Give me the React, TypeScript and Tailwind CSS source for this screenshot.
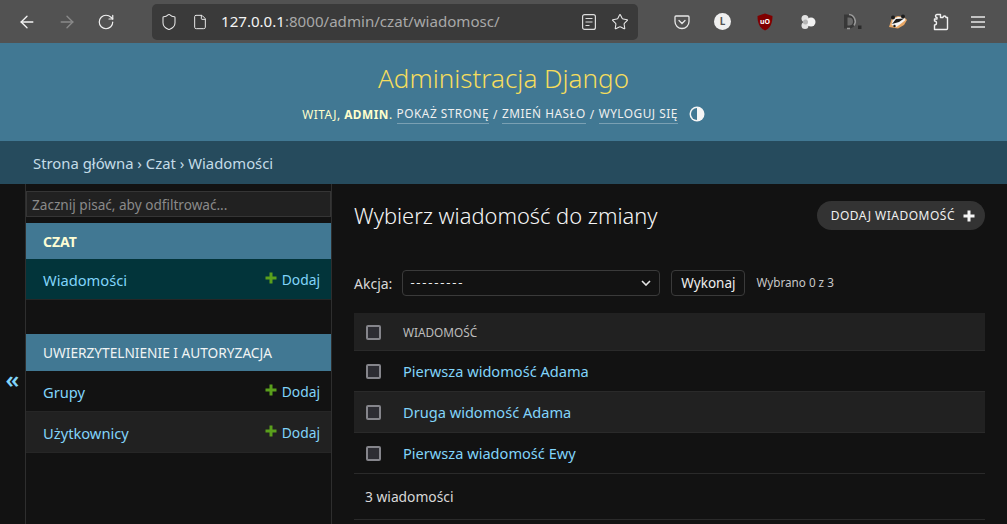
import { ArrowLeft, ArrowRight, RotateCw, Shield, File, Star } from "lucide-react";

const font = "font-['Noto_Sans',sans-serif]";

function Plus({ className }: { className: string }) {
  return (
    <svg viewBox="0 0 12 12" className={className}>
      <path d="M4.500 0.500h3v4h4v3h-4v4h-3v-4h-4v-3h4z" fill="currentColor" />
    </svg>
  );
}

function ExtensionIcons() {
  return (
    <div className="flex items-center">
      {/* pocket */}
      <svg viewBox="0 0 16 16" className="ml-[36px] h-4 w-4 text-[#e8e8e8]" fill="none" stroke="currentColor" strokeWidth="1.300">
        <path d="M2 2h12a1 1 0 0 1 1 1v4.500a7 7 0 0 1-14 0V3a1 1 0 0 1 1-1z" />
        <path d="M5 6.500l3 3 3-3" strokeLinecap="round" />
      </svg>
      {/* account */}
      <div className="ml-[24px] flex h-[17px] w-[17px] items-center justify-center rounded-full bg-[#f0f0f0] text-[10px] font-bold text-[#555]">
        L
      </div>
      {/* ublock */}
      <svg viewBox="0 0 16 18" className="ml-[26px] h-[18px] w-4">
        <path d="M8 0.500l7.500 2.500c0 7-2 12-7.500 14.500C2.500 15 0.500 10 0.500 3z" fill="#800000" />
        <text x="8" y="11" textAnchor="middle" fontSize="7" fontWeight="700" fill="#fff" fontFamily="Noto Sans">
          uO
        </text>
      </svg>
      {/* blobs */}
      <svg viewBox="0 0 16 16" className="ml-[27px] h-4 w-4">
        <circle cx="5" cy="4.500" r="3.500" fill="#e2e2e2" />
        <circle cx="5" cy="11.500" r="3.500" fill="#e2e2e2" />
        <circle cx="11" cy="8" r="4.500" fill="#f2f2f2" />
        <circle cx="5.500" cy="8" r="2.500" fill="#b5b5b5" />
      </svg>
      {/* dark reader */}
      <svg viewBox="0 0 20 18" className="ml-[27px] h-[18px] w-5" fill="none">
        <path d="M1 1.500h5a7 7 0 0 1 0 14H1z" fill="#383838" />
        <path d="M6 1.500a7 7 0 0 1 5 11M4 15.500h3" stroke="#9a9a9a" strokeWidth="1.500" />
        <path d="M4.500 4.500h1.500a4 4 0 0 1 0 8H4.500z" fill="#6a6a6a" />
        <rect x="15" y="12.500" width="3.500" height="3.500" fill="#2c2c2c" />
      </svg>
      {/* badger */}
      <svg viewBox="0 0 20 16" className="ml-[25px] h-4 w-5">
        <path d="M1 13L4 4l6-2 6 1 3 3-3 5-6 3.500z" fill="#e8a765" />
        <path d="M3.500 11L5 5l5-2 6 .5 1.500 2.500-5 4-4 3z" fill="#f5f5f5" />
        <path d="M4 10l4-5 8-.5-5 3.500z" fill="#1c1c1c" />
        <circle cx="5" cy="3.500" r="2" fill="#1c1c1c" />
        <circle cx="15" cy="2.500" r="2" fill="#1c1c1c" />
        <circle cx="6.500" cy="12" r="1.200" fill="#1c1c1c" />
      </svg>
      {/* extensions */}
      <svg viewBox="0 0 18 18" className="ml-[23px] h-[18px] w-[18px]" fill="none" stroke="#f0f0f0" strokeWidth="1.400" strokeLinejoin="round">
        <path d="M6 1.500h3.500v3a1.500 1.500 0 0 1 0 0h2.500a1 1 0 0 1 3 0h1.500v11a1 1 0 0 1-1 1H3.500v-4.500a2 2 0 0 0 0-4V6h2.500V4.500a1.500 1.500 0 0 1 0-3z" />
      </svg>
      {/* menu */}
      <svg viewBox="0 0 14 12" className="ml-[22px] h-[12px] w-[14px]" stroke="#e8e8e8" strokeWidth="1.300">
        <path d="M0 1h14M0 6h14M0 11h14" />
      </svg>
    </div>
  );
}

function Toolbar() {
  return (
    <div className={`flex h-[43px] shrink-0 items-center bg-[#525252] ${font}`}>
      <ArrowLeft className="ml-[17px] h-5 w-5 text-[#f4f4f4]" strokeWidth={1.6} />
      <ArrowRight className="ml-[20px] h-5 w-5 text-[#8a8a8a]" strokeWidth={1.6} />
      <RotateCw className="ml-[20px] h-[18px] w-[18px] text-[#f0f0f0]" strokeWidth={1.6} />
      <div className="ml-[37px] flex h-9 w-[486px] items-center rounded-[5px] bg-[#3a3a3a]">
        <Shield className="ml-[8px] h-[18px] w-[18px] text-[#e8e8e8]" strokeWidth={1.4} />
        <File className="ml-[14px] h-[16px] w-[16px] text-[#e8e8e8]" strokeWidth={1.5} />
        <div className="ml-[13px] text-[15.100px] text-[#a8a8a8]">
          <span className="text-[#f4f4f4]">127.0.0.1</span>:8000/admin/czat/wiadomosc/
        </div>
        <svg viewBox="0 0 14 16" className="ml-auto h-4 w-[14px]" fill="none" stroke="#dcdcdc" strokeWidth="1.200">
          <rect x="0.600" y="0.600" width="12.800" height="14.800" rx="2" />
          <path d="M3.500 4.500h7M3.500 8h7M3.500 11.500h4" />
        </svg>
        <Star className="ml-[15px] mr-[9px] h-[18px] w-[18px] text-[#e8e8e8]" strokeWidth={1.4} />
      </div>
      <ExtensionIcons />
    </div>
  );
}

function SidebarRow({ name, bg }: { name: string; bg: string }) {
  return (
    <div className={`flex h-[41px] items-center justify-between border-b border-[#262626] pl-[17px] pr-[11px] pt-[2px] ${bg}`}>
      <span className="text-[14.700px] text-[#81d4fa]">{name}</span>
      <span className="flex items-center gap-[5px] text-[13.800px] text-[#81d4fa]">
        <Plus className="mb-[5px] h-[12px] w-[12px] text-[#5aa01c]" />
        Dodaj
      </span>
    </div>
  );
}

function Sidebar() {
  return (
    <div className="flex w-[332px] shrink-0 border-r border-[#2e2e2e]">
      <div className="flex w-[26px] shrink-0 items-center justify-center border-r border-[#2e2e2e] pt-[50px] text-[24px] font-semibold leading-none text-[#81d4fa]">
        «
      </div>
      <div className="min-w-0 flex-1 pt-[7px]">
        <input
          readOnly
          placeholder="Zacznij pisać, aby odfiltrować..."
          className="mb-[6px] block h-[26px] w-full border border-[#353535] bg-[#212121] px-[5px] text-[13.600px] text-[#999] placeholder:text-[#8a8a8a]"
        />
        <div className="flex h-[36px] items-center bg-[#417893] pl-[17px] pt-[1px] text-[14px] font-bold text-[#fdfdd4]">
          CZAT
        </div>
        <SidebarRow name="Wiadomości" bg="bg-[#02343a]" />
        <div className="h-[34px]" />
        <div className="flex h-[37px] items-center bg-[#417893] pl-[17px] pt-[1px] text-[13.700px] text-[#f0f4f4]">
          UWIERZYTELNIENIE I AUTORYZACJA
        </div>
        <SidebarRow name="Grupy" bg="bg-[#121212]" />
        <SidebarRow name="Użytkownicy" bg="bg-[#212121]" />
      </div>
    </div>
  );
}

function Checkbox() {
  return <div className="h-[15px] w-[15px] rounded-[2px] border-2 border-[#85858b] bg-[#2d2d33]" />;
}

function TableRow({ label, alt }: { label: string; alt?: boolean }) {
  return (
    <div className={`flex h-[41px] items-center border-b border-[#2a2a2a] pt-[1px] ${alt ? "bg-[#212121]" : ""}`}>
      <div className="w-[49px] pl-[12px]">
        <Checkbox />
      </div>
      <span className="text-[14.600px] text-[#81d4fa]">{label}</span>
    </div>
  );
}

function Content() {
  return (
    <div className="min-w-0 flex-1 px-[22px] pt-[16px]">
      <div className="flex items-start justify-between">
        <h1 className="mt-[1px] text-[21.850px] font-light leading-[30px] text-[#f5f5f5]">Wybierz wiadomość do zmiany</h1>
        <div className="mt-[1px] flex h-[29px] items-center gap-[8px] rounded-full bg-[#333] pl-[14px] pr-[10px] text-[12px] tracking-[0.5px] text-[#f0f0f0]">
          DODAJ WIADOMOŚĆ
          <Plus className="h-[12px] w-[12px] text-[#f5f5f5]" />
        </div>
      </div>
      <div className="mt-[39px] flex h-[26px] items-center text-[14px] text-[#d8d8d8]">
        <span>Akcja:</span>
        <div className="relative ml-[10px] flex h-[26px] w-[258px] items-center rounded-[4px] border border-[#3a3a3a] pl-[7px] text-[13px] tracking-[1.800px] text-[#eee]">
          ---------
          <svg viewBox="0 0 10 6" className="absolute right-[8px] top-[9px] h-[6px] w-[10px]" fill="none" stroke="#e5e5e5" strokeWidth="1.600">
            <path d="M1 1l4 4 4-4" />
          </svg>
        </div>
        <div className="ml-[11px] flex h-[26px] w-[74px] items-center justify-center rounded-[4px] border border-[#3a3a3a] text-[13.500px] text-[#eee]">
          Wykonaj
        </div>
        <span className="ml-[11px] text-[11.700px] text-[#c8c8c8]">Wybrano 0 z 3</span>
      </div>
      <div className="mt-[17px]">
        <div className="flex h-[38px] items-center border-b border-[#2a2a2a] bg-[#212121] pt-[1px]">
          <div className="w-[49px] pl-[12px]">
            <Checkbox />
          </div>
          <span className="pt-[1px] text-[11.800px] text-[#bdbdbd]">WIADOMOŚĆ</span>
        </div>
        <TableRow label="Pierwsza widomość Adama" />
        <TableRow label="Druga widomość Adama" alt />
        <TableRow label="Pierwsza wiadomość Ewy" />
        <div className="flex h-[46px] items-center border-b border-[#2a2a2a] pl-[11px] pt-[2px] text-[13.800px] text-[#d8d8d8]">
          3 wiadomości
        </div>
      </div>
    </div>
  );
}

export default function App() {
  return (
    <div className={`flex h-[524px] w-[1007px] flex-col overflow-hidden bg-[#121212] ${font}`}>
      <Toolbar />
      <div className="flex h-[98px] shrink-0 flex-col items-center bg-[#417893] pt-[17px]">
        <div className="text-[26px] font-light leading-[36px] text-[#f5dd5d]">Administracja Django</div>
        <div className="mt-[9px] flex items-center text-[11.850px] tracking-[0.5px] text-[#ffffcc]">
          <span>
            WITAJ, <b>ADMIN</b>.
          </span>
          <span className="ml-[4px] border-b border-white/30 text-[#f0f0f0]">POKAŻ STRONĘ</span>
          <span className="mx-[4px] text-[#f0f0f0]">/</span>
          <span className="border-b border-white/30 text-[#f0f0f0]">ZMIEŃ HASŁO</span>
          <span className="mx-[4px] text-[#f0f0f0]">/</span>
          <span className="border-b border-white/30 text-[#f0f0f0]">WYLOGUJ SIĘ</span>
          <svg viewBox="0 0 16 16" className="ml-[11px] h-4 w-4">
            <circle cx="8" cy="8" r="7.500" fill="#f5f5f5" />
            <path d="M8 2a6 6 0 0 0 0 12z" fill="#417893" />
          </svg>
        </div>
      </div>
      <div className="flex h-[43px] shrink-0 items-center bg-[#264b5d] pl-[33px] pt-[2px] text-[14.850px] text-[#c4dce8]">
        Strona główna › Czat › Wiadomości
      </div>
      <div className="flex min-h-0 flex-1">
        <Sidebar />
        <Content />
      </div>
    </div>
  );
}
